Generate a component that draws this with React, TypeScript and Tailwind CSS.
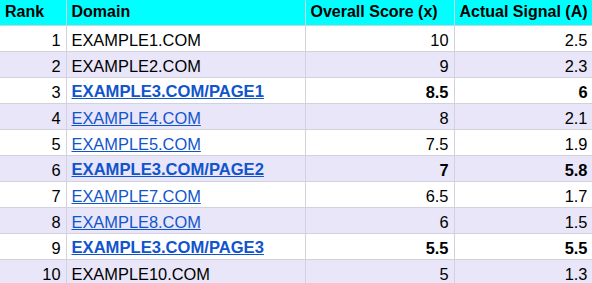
const rows = [
  { rank: 1, domain: 'EXAMPLE1.COM', score: '10', signal: '2.5', kind: 'plain' },
  { rank: 2, domain: 'EXAMPLE2.COM', score: '9', signal: '2.3', kind: 'plain' },
  { rank: 3, domain: 'EXAMPLE3.COM/PAGE1', score: '8.5', signal: '6', kind: 'bold' },
  { rank: 4, domain: 'EXAMPLE4.COM', score: '8', signal: '2.1', kind: 'link' },
  { rank: 5, domain: 'EXAMPLE5.COM', score: '7.5', signal: '1.9', kind: 'link' },
  { rank: 6, domain: 'EXAMPLE3.COM/PAGE2', score: '7', signal: '5.8', kind: 'bold' },
  { rank: 7, domain: 'EXAMPLE7.COM', score: '6.5', signal: '1.7', kind: 'link' },
  { rank: 8, domain: 'EXAMPLE8.COM', score: '6', signal: '1.5', kind: 'link' },
  { rank: 9, domain: 'EXAMPLE3.COM/PAGE3', score: '5.5', signal: '5.5', kind: 'bold' },
  { rank: 10, domain: 'EXAMPLE10.COM', score: '5', signal: '1.3', kind: 'plain' },
]

const App = () => {
  return (
    <div className="w-[592px] h-[283px] overflow-hidden bg-white font-['Liberation_Sans',Arial,sans-serif] text-black">
      <table className="table-fixed border-collapse w-[593px]">
        <colgroup>
          <col className="w-[66px]" />
          <col className="w-[239px]" />
          <col className="w-[149px]" />
          <col className="w-[139px]" />
        </colgroup>
        <thead>
          <tr className="h-[25px] bg-[#00ffff] font-bold text-left text-[16px]">
            <th className="px-[5px] border border-[#c9d6dc] border-t-0 border-l-0 leading-none">Rank</th>
            <th className="px-[5px] border border-[#c9d6dc] border-t-0 leading-none">Domain</th>
            <th className="px-[5px] border border-[#c9d6dc] border-t-0 leading-none">Overall Score (x)</th>
            <th className="px-[5px] border border-[#c9d6dc] border-t-0 leading-none">Actual Signal (A)</th>
          </tr>
        </thead>
        <tbody className="text-[16.4px] leading-[16px]">
          {rows.map((r, i) => {
            const bold = r.kind === 'bold'
            return (
              <tr key={r.rank} className={`h-[26px] ${i % 2 === 1 ? 'bg-[#e8e6f8]' : 'bg-white'}`}>
                <td className="px-[5px] pt-[3px] pb-0 text-right border border-[#d3d2dc] border-l-0">{r.rank}</td>
                <td className="px-[5px] pt-[3px] pb-0 border border-[#d3d2dc] whitespace-nowrap">
                  {r.kind === 'plain' ? (
                    r.domain
                  ) : (
                    <a href="#" className={`text-[#1155cc] underline leading-[16px] ${bold ? 'font-bold text-[16.6px]' : ''}`}>{r.domain}</a>
                  )}
                </td>
                <td className={`px-[5px] pt-[3px] pb-0 text-right border border-[#d3d2dc] ${bold ? 'font-bold' : ''}`}>{r.score}</td>
                <td className={`px-[5px] pt-[3px] pb-0 text-right border border-[#d3d2dc] ${bold ? 'font-bold' : ''}`}>{r.signal}</td>
              </tr>
            )
          })}
        </tbody>
      </table>
    </div>
  )
}

export default App
